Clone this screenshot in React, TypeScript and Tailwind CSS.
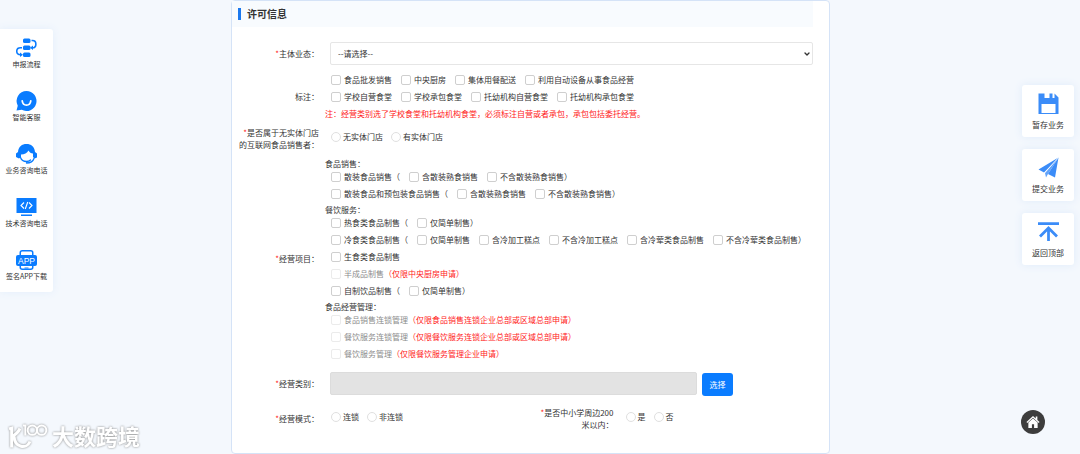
import { useState } from "react";
import type { ReactNode } from "react";
import { ChevronDown } from "lucide-react";

type Option = { label: string; after?: string; disabled?: boolean; note?: string };

const markRows: Option[][] = [
  [
    { label: "食品批发销售" },
    { label: "中央厨房" },
    { label: "集体用餐配送" },
    { label: "利用自动设备从事食品经营" },
  ],
  [
    { label: "学校自营食堂" },
    { label: "学校承包食堂" },
    { label: "托幼机构自营食堂" },
    { label: "托幼机构承包食堂" },
  ],
];

const projectGroups: { title: string; rows: Option[][] }[] = [
  {
    title: "食品销售：",
    rows: [
      [
        { label: "散装食品销售", after: "（" },
        { label: "含散装熟食销售" },
        { label: "不含散装熟食销售", after: "）" },
      ],
      [
        { label: "散装食品和预包装食品销售", after: "（" },
        { label: "含散装熟食销售" },
        { label: "不含散装熟食销售", after: "）" },
      ],
    ],
  },
  {
    title: "餐饮服务：",
    rows: [
      [{ label: "热食类食品制售", after: "（" }, { label: "仅简单制售", after: "）" }],
      [
        { label: "冷食类食品制售", after: "（" },
        { label: "仅简单制售" },
        { label: "含冷加工糕点" },
        { label: "不含冷加工糕点" },
        { label: "含冷荤类食品制售" },
        { label: "不含冷荤类食品制售", after: "）" },
      ],
      [{ label: "生食类食品制售" }],
      [{ label: "半成品制售", disabled: true, note: "（仅限中央厨房申请）" }],
      [{ label: "自制饮品制售", after: "（" }, { label: "仅简单制售", after: "）" }],
    ],
  },
  {
    title: "食品经营管理：",
    rows: [
      [{ label: "食品销售连锁管理", disabled: true, note: "（仅限食品销售连锁企业总部或区域总部申请）" }],
      [{ label: "餐饮服务连锁管理", disabled: true, note: "（仅限餐饮服务连锁企业总部或区域总部申请）" }],
      [{ label: "餐饮服务管理", disabled: true, note: "（仅限餐饮服务管理企业申请）" }],
    ],
  },
];

const FlowIcon = () => (
  <svg viewBox="0 0 42 40" className="h-5 w-[21px]" fill="none" stroke="#0a7cff" strokeWidth="3.2">
    <g fill="#0a7cff" stroke="none">
      <rect x="14" y="1" width="15" height="9" rx="3" />
      <rect x="14" y="15" width="15" height="9" rx="3" />
      <rect x="14" y="29" width="15" height="9" rx="3" />
      <path d="M28 19.500l6-4.500v9zM14 33.500l-6-4.500v9z" />
    </g>
    <path d="M31 5h2c9 0 9 14.500 0 14.500M12 19.500H9c-10 0-10 14 0 14" />
  </svg>
);

const ChatIcon = () => (
  <svg viewBox="0 0 42 40" className="h-5 w-[21px]">
    <path d="M21 0a20 20 0 1 1-9.500 37.600L1 39l2.500-9.500A20 20 0 0 1 21 0z" fill="#0a7cff" />
    <path d="M12.500 20c1.500 11 15.500 11 17 0" fill="none" stroke="#fff" strokeWidth="3.600" strokeLinecap="round" />
  </svg>
);

const ServiceIcon = () => (
  <svg viewBox="0 0 42 40" className="h-5 w-[21px]">
    <path d="M4 16C5 5 12 0 21 0s16 5 17 16l4 3v8l-5 2-3-3v-7c-4 0-7-2-9-6-3 5-8 8-15 8v5l-4 3-6-3v-7z" fill="#0a7cff" />
    <path d="M9 27c2 6 7 8 12 8 3 0 6-1 8-3M21 38c8 0 13-3 15-9" fill="none" stroke="#0a7cff" strokeWidth="2.600" strokeLinecap="round" />
  </svg>
);

const CodeIcon = () => (
  <svg viewBox="0 0 42 40" className="h-5 w-[21px]">
    <path d="M1 2h40v30H1zM10 35h22v3H10z" fill="#0a7cff" />
    <path d="M16 11l-6 6 6 6M26 11l6 6-6 6M23.500 10l-5 14" fill="none" stroke="#fff" strokeWidth="2.200" />
  </svg>
);

const AppIcon = () => (
  <svg viewBox="0 0 42 40" className="h-5 w-[21px]">
    <rect x="8.500" y="1.500" width="25" height="37" rx="4" fill="#fff" stroke="#0a7cff" strokeWidth="3" />
    <rect x="0" y="10" width="42" height="22" rx="4" fill="#0a7cff" />
    <path d="M17 36h8" stroke="#0a7cff" strokeWidth="2" />
    <text x="21" y="27" textAnchor="middle" fontSize="17" fill="#fff" className="font-['Liberation_Sans',sans-serif]">
      APP
    </text>
  </svg>
);

const SaveIcon = () => (
  <svg viewBox="0 0 42 42" className="size-[21px]" fill="#3b8cf8">
    <path
      fillRule="evenodd"
      d="M1 1h12v9h20V1l8 8v33H1zM7 22v18h28V22zM23 1h6v9h-6z"
    />
  </svg>
);

const PlaneIcon = () => (
  <svg viewBox="0 0 42 42" className="size-[21px]" fill="#3b8cf8">
    <path d="M41 1L1 25l11 6zM41 1L20 34l14 7z" />
    <path d="M41 1L14 32l2 9 4-7z" opacity="0.800" />
    <path d="M41 1L13.500 31.500" stroke="#fff" strokeWidth="1.200" />
  </svg>
);

const TopIcon = () => (
  <svg viewBox="0 0 42 42" className="size-[21px]" fill="none" stroke="#3b8cf8" strokeWidth="5.500">
    <path d="M0 5h42M21 40V14M4 31l17-17 17 17" />
  </svg>
);

const navItems = [
  { label: "申报流程", icon: <FlowIcon /> },
  { label: "智能客服", icon: <ChatIcon /> },
  { label: "业务咨询电话", icon: <ServiceIcon /> },
  { label: "技术咨询电话", icon: <CodeIcon /> },
  { label: "签名APP下载", icon: <AppIcon /> },
];

const actions = [
  { label: "暂存业务", icon: <SaveIcon /> },
  { label: "提交业务", icon: <PlaneIcon /> },
  { label: "返回顶部", icon: <TopIcon /> },
];

const CheckOption = ({ label, after, disabled, note }: Option) => (
  <div className="flex items-center whitespace-nowrap">
    <label className={`flex items-center gap-[3px] ${disabled ? "text-[#8c8c8c]" : ""}`}>
      <input
        type="checkbox"
        disabled={disabled}
        className="size-[10px] shrink-0 appearance-none rounded-[2px] border border-[#cfcfcf] bg-white checked:bg-[#0a7cff] disabled:border-[#ebebeb]"
      />
      {label}
    </label>
    {after}
    {note && <span className="text-[#ff1a1a]">{note}</span>}
  </div>
);

const CheckRow = ({ options }: { options: Option[] }) => (
  <div className="flex h-[17px] items-center gap-[9px] pl-[6px]">
    {options.map((o, i) => (
      <CheckOption key={i} {...o} />
    ))}
  </div>
);

const RadioRow = ({ name, options }: { name: string; options: string[] }) => (
  <div className="flex h-5 items-center gap-2 pl-[6px]">
    {options.map((o) => (
      <label key={o} className="flex items-center gap-[2px] whitespace-nowrap">
        <input
          type="radio"
          name={name}
          className="size-[10px] shrink-0 appearance-none rounded-full border border-[#e0e0e0] bg-white checked:border-[3px] checked:border-[#0a7cff]"
        />
        {o}
      </label>
    ))}
  </div>
);

const Field = ({
  label,
  required,
  htmlFor,
  children,
}: {
  label: ReactNode;
  required?: boolean;
  htmlFor?: string;
  children: ReactNode;
}) => {
  const text = (
    <>
      {required && <span className="text-[#ff1a1a]">*</span>}
      {label}
    </>
  );
  const cls = "w-[87px] shrink-0 self-center whitespace-nowrap text-right leading-3";

  return (
    <div className="flex items-start gap-[6px]" role="group">
      {htmlFor ? (
        <label htmlFor={htmlFor} className={cls}>
          {text}
        </label>
      ) : (
        <span className={cls}>{text}</span>
      )}
      <div className="min-w-0 flex-1">{children}</div>
    </div>
  );
};

const Watermark = () => (
  <div className="absolute bottom-[5px] left-2 flex items-center gap-1 text-white drop-shadow-[0_0_1px_#888]">
    <svg viewBox="0 0 120 80" className="h-[27px] w-10" fill="none" stroke="currentColor" strokeWidth="9">
      <path d="M3 20l8-2v58" />
      <path d="M36 19C30 32 22 38 11 43M18 42c2 36 38 40 48 16" />
      <g strokeWidth="6">
        <path d="M45 10h7v30" />
        <circle cx="73" cy="24" r="14" />
        <circle cx="101" cy="24" r="14" />
      </g>
    </svg>
    <span className="text-[22px] leading-7 font-bold">大数跨境</span>
  </div>
);

const App = () => {
  const [business, setBusiness] = useState("");

  return (
    <div
      lang="zh-CN"
      className="relative flex min-h-screen items-start bg-[#f4f8fd] font-['Noto_Sans_CJK_SC',sans-serif] text-[8px] leading-3 text-[#333]"
    >
      <nav className="mt-[29px] flex w-[53px] shrink-0 flex-col gap-[21px] rounded-r-[3px] bg-white pt-[9px] pb-[10px] shadow-[0_0_8px_#e3eefb]">
        {navItems.map((item) => (
          <a key={item.label} href="#" className="flex flex-col items-center text-[7px] whitespace-nowrap">
            {item.icon}
            {item.label}
          </a>
        ))}
      </nav>

      <main className="flex min-w-0 flex-1 justify-center">
        <form className="w-full max-w-[599px] rounded-[4px] border border-[#d5e3f7] bg-white pr-4 pb-[22px]">
          <h2 className="flex h-[26px] items-center gap-[6px] bg-[#f8fbfe] pl-[6px] text-[10px] font-bold">
            <span className="h-3 w-[3px] bg-[#1b78ee]" />
            许可信息
          </h2>

          <div className="mt-[15px]">
            <Field label="主体业态：" required htmlFor="business">
              <div className="relative ml-[5px]">
                <select
                  id="business"
                  value={business}
                  onChange={(e) => setBusiness(e.target.value)}
                  className="block h-[23px] w-full appearance-none rounded-[2px] border border-[#e6e6e6] bg-white px-[7px]"
                >
                  <option value="">--请选择--</option>
                  <option value="sale">食品销售经营者</option>
                  <option value="catering">餐饮服务经营者</option>
                </select>
                <ChevronDown
                  className="pointer-events-none absolute top-2 right-[2px] size-2 text-[#333]"
                  strokeWidth={4}
                />
              </div>
            </Field>
          </div>

          <div className="mt-[6px]">
            <Field label="标注：">
              {markRows.map((row, i) => (
                <CheckRow key={i} options={row} />
              ))}
              <p className="leading-[17px] text-[#ff1a1a]">
                注：经营类别选了学校食堂和托幼机构食堂，必须标注自营或者承包，承包包括委托经营。
              </p>
            </Field>
          </div>

          <div className="mt-[5px]">
            <Field
              required
              label={
                <>
                  是否属于无实体门店
                  <br />
                  的互联网食品销售者：
                </>
              }
            >
              <RadioRow name="store" options={["无实体门店", "有实体门店"]} />
            </Field>
          </div>

          <div className="mt-[5px]">
            <Field label="经营项目：" required>
              {projectGroups.map((group) => (
                <div key={group.title}>
                  <div className="flex h-3 items-end leading-2">{group.title}</div>
                  {group.rows.map((row, i) => (
                    <CheckRow key={i} options={row} />
                  ))}
                </div>
              ))}
            </Field>
          </div>

          <div className="mt-[10px]">
            <Field label="经营类别：" required htmlFor="category">
              <div className="ml-[5px] flex h-6 gap-[5px]">
                <input
                  id="category"
                  disabled
                  className="h-[23px] w-[76%] self-start rounded-[2px] border border-[#dcdcdc] bg-[#e3e3e3] px-2"
                />
                <button type="button" className="h-[23px] w-[31px] self-end rounded-[3px] bg-[#0a7cff] text-white">
                  选择
                </button>
              </div>
            </Field>
          </div>

          <div className="mt-[11px] grid grid-cols-2">
            <Field label="经营模式：" required>
              <RadioRow name="mode" options={["连锁", "非连锁"]} />
            </Field>
            <div className="pl-1">
              <Field
                required
                label={
                  <>
                    是否中小学周边200
                    <br />
                    米以内：
                  </>
                }
              >
                <RadioRow name="nearby" options={["是", "否"]} />
              </Field>
            </div>
          </div>
        </form>
      </main>

      <aside className="mt-[85px] flex w-[72px] shrink-0 flex-col gap-3 pr-[6px] pl-[14px]">
        {actions.map((action) => (
          <button
            key={action.label}
            type="button"
            className="flex h-[52px] flex-col items-center rounded-[3px] bg-white pt-2 leading-[22px] shadow-[0_0_8px_#dfebfa]"
          >
            {action.icon}
            {action.label}
          </button>
        ))}
      </aside>

      <a
        href="#"
        aria-label="首页"
        className="absolute right-[35px] bottom-5 flex size-6 items-center justify-center rounded-full bg-[#3d3d3d]"
      >
        <svg viewBox="0 0 24 22" className="h-3 w-[14px]" fill="#fff">
          <path d="M12 0L0 11l1.500 1.700L12 3.300l10.500 9.400L24 11l-4-3.700V1h-3v3.600z" />
          <path d="M12 4.500L3.500 12v10H10v-7h4v7h6.500V12z" />
        </svg>
      </a>

      <Watermark />
    </div>
  );
};

export default App;
